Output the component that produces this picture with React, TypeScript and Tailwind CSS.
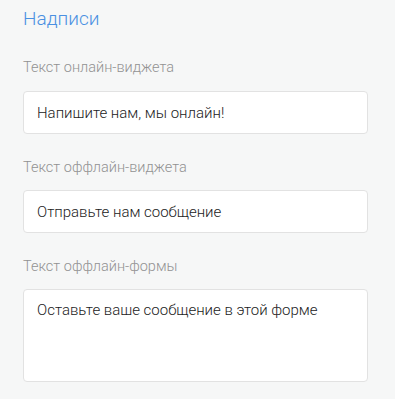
import React from "react";

export default function App() {
  const font = { fontFamily: "Roboto, 'Noto Sans', sans-serif" };
  return (
    <div className="w-[395px] h-[399px] bg-[#f6f7f7] overflow-hidden" style={font}>
      <div className="pl-[23px] pt-[7px] w-[368px]">
        <h2 className="text-[19px] leading-[24px] text-[#4a90e2] font-light">Надписи</h2>
        <div className="mt-[27px] flex flex-col">
          <label className="text-[14.5px] leading-[20px] text-[#929292] font-light">Текст онлайн-виджета</label>
          <input
            readOnly
            defaultValue="Напишите нам, мы онлайн!"
            className="mt-[13px] h-[43px] w-[345px] rounded-[4px] border border-[#e2e2e2] bg-white px-[13px] text-[15px] font-light text-[#222] outline-none"
            style={font}
          />
          <label className="mt-[24px] text-[14.5px] leading-[20px] text-[#929292] font-light">Текст оффлайн-виджета</label>
          <input
            readOnly
            defaultValue="Отправьте нам сообщение"
            className="mt-[12px] h-[43px] w-[345px] rounded-[4px] border border-[#e2e2e2] bg-white px-[13px] text-[15px] font-light text-[#222] outline-none"
            style={font}
          />
          <label className="mt-[24px] text-[14.5px] leading-[20px] text-[#929292] font-light">Текст оффлайн-формы</label>
          <textarea
            readOnly
            defaultValue="Оставьте ваше сообщение в этой форме"
            className="mt-[12px] h-[93px] w-[345px] resize-none rounded-[4px] border border-[#e2e2e2] bg-white px-[13px] pt-[10px] text-[15px] font-light leading-[20px] text-[#222] outline-none"
            style={font}
          />
        </div>
      </div>
    </div>
  );
}
